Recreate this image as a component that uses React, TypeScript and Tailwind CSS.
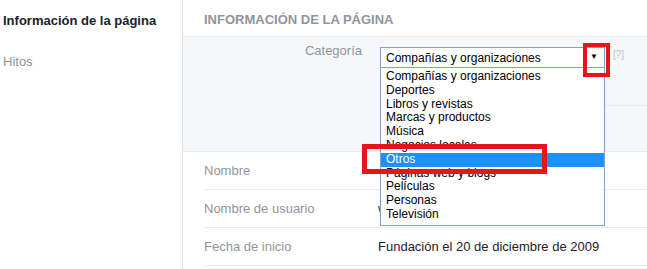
import React from "react";

const items = [
  "Compañías y organizaciones",
  "Deportes",
  "Libros y revistas",
  "Marcas y productos",
  "Música",
  "Negocios locales",
  "Otros",
  "Páginas web y blogs",
  "Películas",
  "Personas",
  "Televisión",
];

function Row({ label, value }: { label: string; value: string }) {
  return (
    <div className="ml-[21px] flex h-[38px] items-center border-b border-[#e9ebee]">
      <div className="w-[174px] text-[13px] text-[#90949c]">{label}</div>
      <div className="text-[13px] text-[#1d2129]">{value}</div>
    </div>
  );
}

export default function App() {
  return (
    <div
      className="relative flex h-[269px] w-[647px] overflow-hidden bg-white"
      style={{ fontFamily: '"Liberation Sans", Arial, sans-serif' }}
    >
      {/* Sidebar */}
      <div className="w-[183px] shrink-0 border-r border-[#dddfe2] pl-[3px] pt-[13px]">
        <div className="text-[13px] font-bold leading-[16px] text-[#1d2129]">
          Información de la página
        </div>
        <div className="mt-[25px] text-[13px] leading-[16px] text-[#90949c]">Hitos</div>
      </div>

      {/* Main */}
      <div className="flex-1">
        <div className="flex h-[37px] items-center border-b border-[#e9ebee] pl-[21px] pt-[4px]">
          <span className="text-[13px] font-bold text-[#90949c]">INFORMACIÓN DE LA PÁGINA</span>
        </div>

        <div className="h-[115px] border-b border-[#e9ebee] bg-[#f6f7f9]">
          <div className="relative h-[69px]">
            <div className="flex pt-[10px]">
              <div className="-mt-[4px] w-[197px] pr-[18px] text-right text-[13px] leading-[16px] text-[#90949c]">
                Categoría
              </div>
              <div className="relative">
                {/* select */}
                <div className="relative flex h-[21px] w-[225px] items-center border border-[#7da2ce] bg-white pl-[5px] text-[12px] text-black">
                  Compañías y organizaciones
                  <span className="absolute right-[6px] top-[4px] text-[8px] leading-[10px]">▼</span>
                </div>
                {/* list */}
                <div className="absolute left-0 top-[20px] z-10 w-[225px] border border-[#7da2ce] bg-white pb-[3px] pt-[2px]">
                  {items.map((it) => (
                    <div
                      key={it}
                      className={
                        "h-[13.8px] pl-[5px] text-[12px] leading-[13.8px] " +
                        (it === "Otros" ? "bg-[#1e90ff] text-white" : "text-black")
                      }
                    >
                      {it}
                    </div>
                  ))}
                </div>
              </div>
              <div className="ml-[8px] pt-[2px] text-[10px] leading-[12px] text-[#bec3c9]">[?]</div>
            </div>
            <div className="absolute bottom-0 left-[197px] right-0 border-b border-[#e9ebee]" />
          </div>
        </div>

        <Row label="Nombre" value="" />
        <Row label="Nombre de usuario" value="w" />
        <Row label="Fecha de inicio" value="Fundación el 20 de diciembre de 2009" />
      </div>

      {/* annotations */}
      <div className="pointer-events-none absolute left-[583px] top-[43px] z-20 h-[34px] w-[27px] border-[4px] border-[#e8141c]" />
      <div className="pointer-events-none absolute left-[362px] top-[144px] z-20 h-[30px] w-[185px] border-[5px] border-[#e8141c]" />
    </div>
  );
}
